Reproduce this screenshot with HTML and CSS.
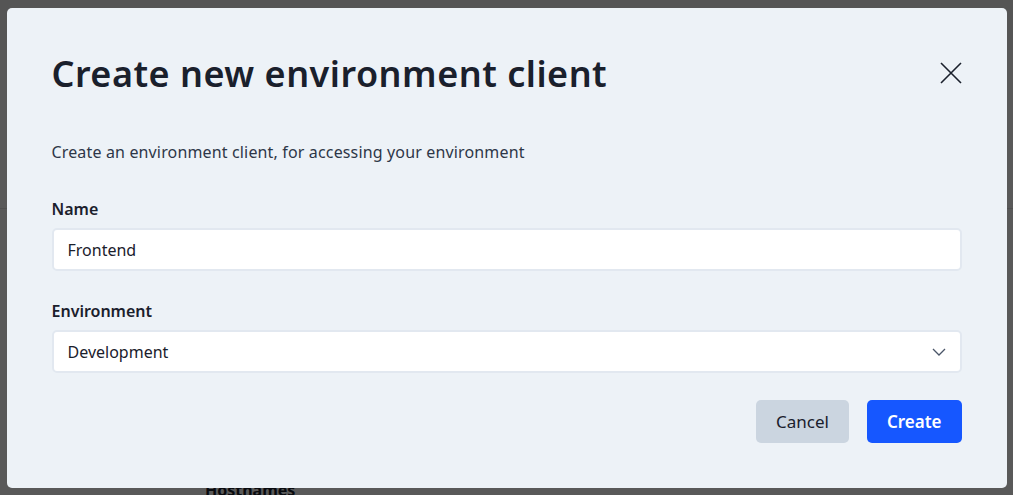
FILE: index.html
```html
<!DOCTYPE html>
<html lang="en">
<head>
  <meta charset="UTF-8" />
  <meta name="viewport" content="width=device-width, initial-scale=1.0" />
  <title>Create new environment client</title>
  <link rel="stylesheet" href="styles.css">
</head>
<body>
  <!-- Page behind the dialog -->
  <div class="page">
    <header class="page-header"></header>
    <main class="page-main">
      <div class="page-rule"></div>
      <h3 class="page-section">Hostnames</h3>
    </main>
  </div>

  <!-- Dialog overlay -->
  <div class="overlay">
    <section class="modal" role="dialog" aria-labelledby="modal-title">
      <div class="modal-head">
        <h2 id="modal-title" class="modal-title">Create new environment client</h2>
        <button class="modal-close" aria-label="Close">
          <svg width="22" height="22" viewBox="0 0 22 22" fill="none" stroke="#1a202c" stroke-width="1.6">
            <path d="M1 1 L21 21 M21 1 L1 21" />
          </svg>
        </button>
      </div>

      <p class="modal-text">Create an environment client, for accessing your environment</p>

      <div class="field">
        <label class="field-label" for="name">Name</label>
        <input class="field-input" id="name" type="text" value="Frontend" />
      </div>

      <div class="field">
        <label class="field-label" for="env">Environment</label>
        <div class="select">
          <span>Development</span>
          <svg width="14" height="8" viewBox="0 0 14 8" fill="none" stroke="#4a5568" stroke-width="1.3">
            <path d="M1 1 L7 7 L13 1" />
          </svg>
        </div>
      </div>

      <div class="modal-foot">
        <button class="btn btn-cancel">Cancel</button>
        <button class="btn btn-create">Create</button>
      </div>
    </section>
  </div>
</body>
</html>
```

FILE: styles.css
```css
/* Base page */
body {
  margin: 0;
  font-family: "Noto Sans", "Open Sans", sans-serif;
  background-color: #ffffff;
  color: #1a202c;
}
.page-header {
  height: 50px;
  background-color: #f2f2f2;
}
.page-main {
  padding: 0 0 0 205px;
}
.page-rule {
  height: 158px;
  border-bottom: 1px solid #e6e6e6;
  margin-left: -205px;
}
.page-section {
  margin: 270px 0 0;
  font-size: 16px;
  font-weight: 700;
  color: #1a202c;
}

/* Overlay */
.overlay {
  position: fixed;
  inset: 0;
  background-color: rgba(0, 0, 0, 0.65);
  display: flex;
  justify-content: center;
  align-items: flex-start;
  padding-top: 8px;
}
.modal {
  width: 1000px;
  box-sizing: border-box;
  background-color: #edf2f7;
  border-radius: 5px;
  padding: 44px 45px 45px 45px;
}

/* Header */
.modal-head {
  display: flex;
  justify-content: space-between;
  align-items: flex-start;
}
.modal-title {
  margin: 0;
  font-size: 36px;
  line-height: 44px;
  font-weight: 600;
  letter-spacing: 0.5px;
  color: #1a202c;
}
.modal-close {
  border: none;
  background: none;
  padding: 0;
  margin: 10px 0 0;
  width: 22px;
  height: 22px;
  cursor: pointer;
  display: block;
}
.modal-close svg {
  display: block;
}
.modal-text {
  margin: 44px 0 33px;
  font-size: 16px;
  line-height: 24px;
  letter-spacing: 0.15px;
  color: #2d3748;
}

/* Fields */
.field {
  margin-bottom: 28px;
}
.field-label {
  display: block;
  font-size: 16px;
  line-height: 24px;
  font-weight: 600;
  color: #1a202c;
  margin-bottom: 7px;
}
.field-input,
.select {
  display: flex;
  align-items: center;
  justify-content: space-between;
  width: 100%;
  height: 43px;
  box-sizing: border-box;
  border: 2px solid #e2e8f0;
  border-radius: 5px;
  background-color: #ffffff;
  padding: 0 14px;
  font-family: inherit;
  font-size: 16px;
  color: #1a202c;
  outline: none;
}
.select svg {
  display: block;
}

/* Footer */
.modal-foot {
  display: flex;
  justify-content: flex-end;
  gap: 18px;
  margin-top: -1px;
}
.btn {
  height: 43px;
  padding: 0 20px;
  border: none;
  border-radius: 5px;
  font-family: inherit;
  font-size: 17px;
  cursor: pointer;
}
.btn-cancel {
  background-color: #cbd5e0;
  color: #1a202c;
}
.btn-create {
  background-color: #1657ff;
  color: #ffffff;
  font-weight: 600;
}
```
